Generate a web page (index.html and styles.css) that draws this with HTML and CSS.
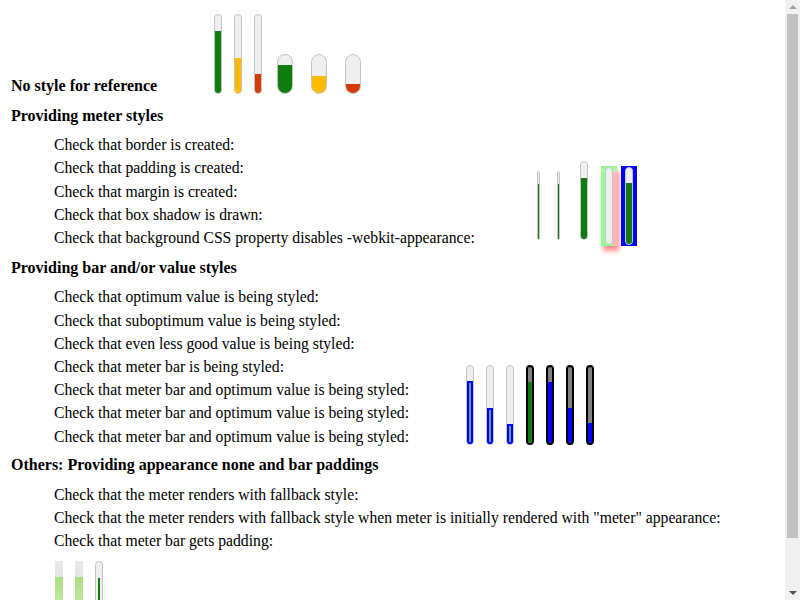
FILE: index.html
```html
<!DOCTYPE html>
<html lang="en">
  <head>
    <meta charset="UTF-8" />
    <title>Vertical meter styles</title>
    <link rel="stylesheet" href="styles.css">
  </head>
  <body>
    <div class="row first">
      <div class="label label-1"><h4 class="title">No style for reference</h4></div>
      <div class="meters">
        <div class="meter tall"><div class="value good" style="height:80%"></div></div>
        <div class="meter tall"><div class="value fair" style="height:45%"></div></div>
        <div class="meter tall"><div class="value bad" style="height:24%"></div></div>
        <div class="meter fat"><div class="value good" style="height:75%"></div></div>
        <div class="meter fat"><div class="value fair" style="height:45%"></div></div>
        <div class="meter fat"><div class="value bad" style="height:24%"></div></div>
      </div>
    </div>

    <h4 class="title section">Providing meter styles</h4>
    <div class="row">
      <div class="label label-2 checks">
        <div>Check that border is created:</div>
        <div>Check that padding is created:</div>
        <div>Check that margin is created:</div>
        <div>Check that box shadow is drawn:</div>
        <div>Check that background CSS property disables -webkit-appearance:</div>
      </div>
      <div class="meters styled">
        <div class="meter thin"><div class="value good" style="height:82%"></div></div>
        <div class="meter thin"><div class="value good" style="height:82%"></div></div>
        <div class="meter tall short"><div class="value good" style="height:80%"></div></div>
        <div class="shadow-box"><div class="meter inner"></div></div>
        <div class="blue-box"><div class="meter inner"><div class="value good" style="height:80%"></div></div></div>
      </div>
    </div>

    <h4 class="title section">Providing bar and/or value styles</h4>
    <div class="row">
      <div class="label label-3 checks">
        <div>Check that optimum value is being styled:</div>
        <div>Check that suboptimum value is being styled:</div>
        <div>Check that even less good value is being styled:</div>
        <div>Check that meter bar is being styled:</div>
        <div>Check that meter bar and optimum value is being styled:</div>
        <div>Check that meter bar and optimum value is being styled:</div>
        <div>Check that meter bar and optimum value is being styled:</div>
      </div>
      <div class="meters bars">
        <div class="meter tall"><div class="value outlined" style="height:80%"></div></div>
        <div class="meter tall"><div class="value outlined" style="height:46%"></div></div>
        <div class="meter tall"><div class="value outlined" style="height:26%"></div></div>
        <div class="meter dark"><div class="value good" style="height:80%"></div></div>
        <div class="meter dark"><div class="value blue" style="height:80%"></div></div>
        <div class="meter dark"><div class="value blue" style="height:46%"></div></div>
        <div class="meter dark"><div class="value blue" style="height:26%"></div></div>
      </div>
    </div>

    <h4 class="title section last">Others: Providing appearance none and bar paddings</h4>
    <div class="checks">
      <div>Check that the meter renders with fallback style:</div>
      <div>Check that the meter renders with fallback style when meter is initially rendered with "meter" appearance:</div>
      <div>Check that meter bar gets padding:</div>
    </div>
    <div class="meters fallback">
      <div class="meter plain"><div class="value lime" style="height:80%"></div></div>
      <div class="meter plain"><div class="value lime" style="height:80%"></div></div>
      <div class="meter tall padded"><div class="value good" style="height:80%"></div></div>
    </div>

    <div class="scrollbar" aria-hidden="true">
      <div class="arrow up"></div>
      <div class="thumb"></div>
      <div class="arrow down"></div>
    </div>
  </body>
</html>
```

FILE: styles.css
```css
body {
  margin: 8px;
  font-family: "Liberation Serif", serif;
  font-size: 16px;
  line-height: 23.2px;
  color: #000;
}
.title {
  margin: 0;
  padding-left: 3px;
  font-size: 16px;
  font-weight: bold;
}
.section {
  margin-top: 7px;
  margin-bottom: 6px;
}
.section.last {
  margin-top: 5px;
  margin-bottom: 7px;
}
.row {
  display: flex;
  align-items: flex-end;
}
.first {
  margin-top: 6px;
}
.first .meters {
  margin-bottom: 3px;
}
.label {
  flex: none;
}
.label-1 {
  width: 206px;
}
.label-2 {
  width: 483px;
}
.label-3 {
  width: 412px;
}
.checks {
  padding-left: 46px;
  font-size: 15.7px;
}
.meters {
  display: flex;
  align-items: flex-end;
  margin-bottom: 2px;
}
.meters.styled,
.meters.bars {
  margin-bottom: 3px;
}

/* meter track */
.meter {
  flex: none;
  display: flex;
  flex-direction: column;
  justify-content: flex-end;
  box-sizing: border-box;
  border: 1px solid #c4c4c4;
  border-radius: 8px;
  background: #efefef;
  overflow: hidden;
  margin-right: 12px;
}
.meter:last-child {
  margin-right: 0;
}
.tall {
  width: 8px;
  height: 80px;
}
.fat {
  width: 16px;
  height: 40px;
  margin-right: 18px;
}
.first .tall:nth-child(3) {
  margin-right: 15px;
}
.value {
  width: 100%;
}
.good {
  background: #107c10;
}
.fair {
  background: #ffb900;
}
.bad {
  background: #d83b01;
}
.blue {
  background: #0000ff;
}

/* providing meter styles */
.thin {
  width: 3px;
  height: 69px;
  margin-right: 17px;
  margin-bottom: 6px;
  border-radius: 2px;
}
.thin + .thin {
  margin-right: 20px;
}
.thin .value {
  margin: 0 auto;
  width: 1px;
}
.styled .short {
  height: 79px;
  margin-right: 13px;
  margin-bottom: 6px;
}
.shadow-box {
  flex: none;
  width: 8px;
  height: 80px;
  padding: 0 4px;
  background:
    linear-gradient(#90ff90, #b8f5b0) top / 100% 6px no-repeat,
    linear-gradient(to right, #90ff90 12px, #ffb6b6 12px);
  box-shadow: 2px 5px 5px rgba(255, 0, 0, 0.45);
  margin-right: 4px;
  display: flex;
  align-items: center;
}
.blue-box {
  flex: none;
  width: 8px;
  height: 80px;
  padding: 0 4px;
  background: #0000ff;
  display: flex;
  align-items: center;
}
.inner {
  width: 8px;
  height: 78px;
  margin: 0;
}

/* bar and value styles */
.outlined {
  box-sizing: border-box;
  border: 2px solid #0000ff;
  background: #6f9a92;
}
.dark {
  width: 8px;
  height: 80px;
  border: 2px solid #000;
  border-radius: 4px;
  background: #808080;
}

/* fallback */
.fallback {
  margin-top: 8px;
  padding-left: 47px;
}
.plain {
  width: 8px;
  height: 80px;
  border: none;
  border-radius: 0;
  background: linear-gradient(#e8e8e8, #d8d8d8);
}
.lime {
  background: linear-gradient(to bottom, #aadd82, #c8ecab 50%, #96cd6e);
}
.padded {
  padding: 2px 2px;
  align-items: center;
}
.padded .value {
  width: 2px;
}

/* window scrollbar */
.scrollbar {
  position: fixed;
  top: 0;
  right: 0;
  width: 15px;
  height: 100%;
  background: #f1f1f1;
}
.thumb {
  position: absolute;
  left: 2px;
  top: 14px;
  width: 11px;
  height: 524px;
  background: #c1c1c1;
}
.arrow {
  position: absolute;
  left: 4px;
  width: 0;
  height: 0;
  border-left: 4px solid transparent;
  border-right: 4px solid transparent;
}
.up {
  top: 5px;
  border-bottom: 4px solid #a3a3a3;
}
.down {
  bottom: 5px;
  border-top: 4px solid #505050;
}
```
